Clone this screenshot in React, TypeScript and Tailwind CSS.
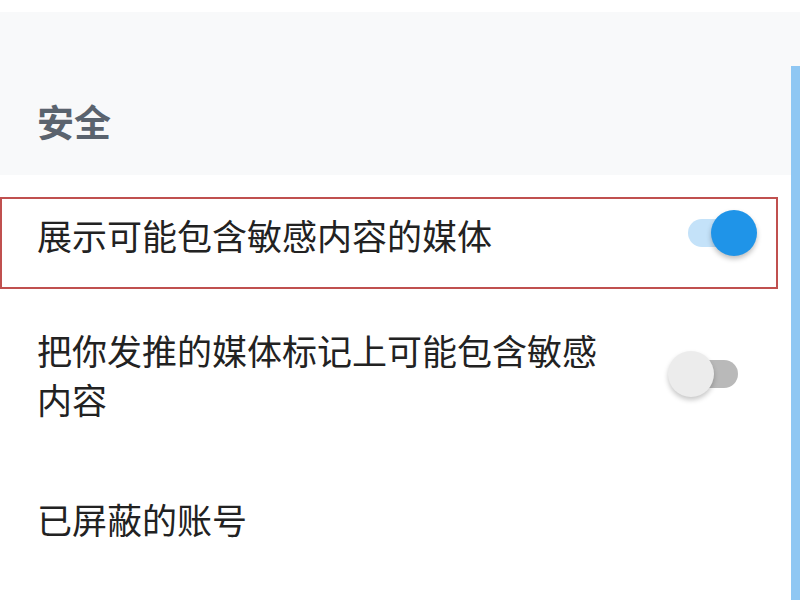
import React from "react";

const font = { fontFamily: '"Noto Sans CJK SC", "Noto Sans", sans-serif' };

// on / off toggle in the old Android style
const Toggle = ({ on }: { on: boolean }) => {
  if (on) {
    return (
      <div className="relative w-[72px] h-[48px] flex items-center">
        <div className="ml-[2px] w-[50px] h-[28px] rounded-full bg-[#c4e2f9]" />
        <div className="absolute right-[1px] top-[1px] w-[46px] h-[46px] rounded-full bg-[#1f94e8] shadow-[0_3px_5px_rgba(0,0,0,0.25)]" />
      </div>
    );
  }
  return (
    <div className="relative w-[72px] h-[48px] flex items-center">
      <div className="ml-[20px] w-[50px] h-[28px] rounded-full bg-[#b9b9b9]" />
      <div className="absolute left-[0px] top-[1px] w-[46px] h-[46px] rounded-full bg-[#ececec] shadow-[0_3px_5px_rgba(0,0,0,0.22)]" />
    </div>
  );
};

export default function App() {
  return (
    <div className="relative w-[800px] h-[600px] bg-white overflow-hidden" style={font}>
      <div className="h-[12px] bg-white" />
      <div className="h-[163px] bg-[#f8f9fa] flex items-end pl-[37px] pb-[32px]">
        <h2 className="text-[37px] leading-[44px] font-bold text-[#5a636e]">安全</h2>
      </div>

      <div className="mt-[22px] mr-[22px] h-[92px] border-2 border-[#c0504f] flex items-center justify-between pl-[35px] pr-[18px]">
        <span className="text-[35px] leading-[48px] text-[#222] -mt-[16px]">展示可能包含敏感内容的媒体</span>
        <div className="-mt-[20px]">
          <Toggle on />
        </div>
      </div>

      <div className="mr-[22px] pt-[36px] flex items-center justify-between pl-[37px] pr-[38px]">
        <span className="w-[575px] text-[35px] leading-[49px] text-[#222]">把你发推的媒体标记上可能包含敏感内容</span>
        <Toggle on={false} />
      </div>

      <div className="pl-[37px] pt-[72px]">
        <span className="text-[35px] leading-[48px] text-[#222]">已屏蔽的账号</span>
      </div>

      {/* scroll indicator on the right edge */}
      <div className="absolute right-0 top-[66px] bottom-0 w-[9px] bg-[#8fc7f3]" />
    </div>
  );
}
